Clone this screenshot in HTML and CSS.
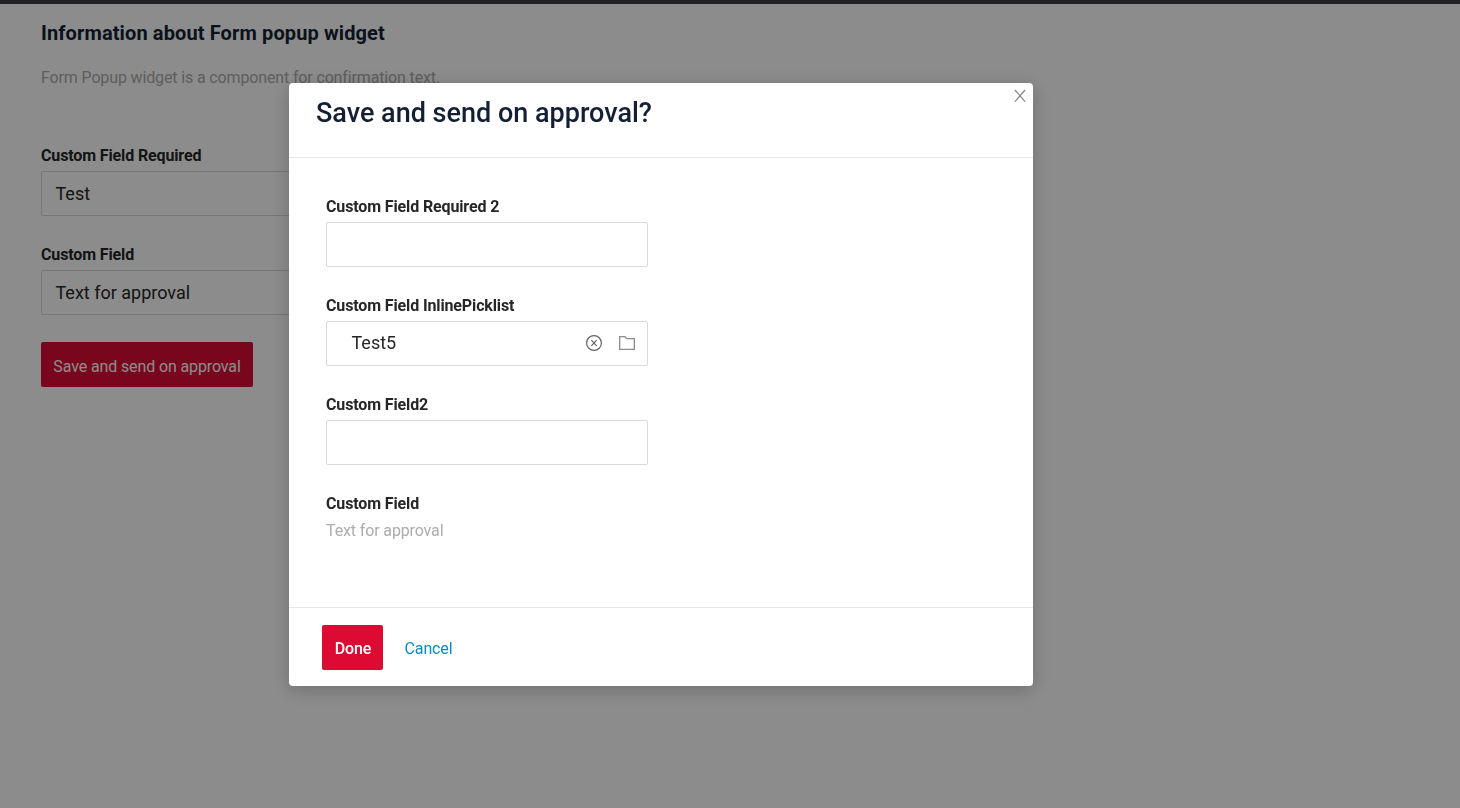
FILE: index.html
```html
<!DOCTYPE html>
<html lang="en">
<head>
<meta charset="utf-8">
<title>Form popup widget</title>
<link rel="stylesheet" href="styles.css">
</head>
<body>
<div class="topbar"></div>
<main class="page">
  <h1 class="page-title">Information about Form popup widget</h1>
  <p class="page-text">Form Popup widget is a component for confirmation text.</p>
  <div class="field">
    <span class="label">Custom Field Required</span>
    <div class="input">Test</div>
  </div>
  <div class="field">
    <span class="label">Custom Field</span>
    <div class="input">Text for approval</div>
  </div>
  <button class="btn btn-save">Save and send on approval</button>
</main>
<div class="mask">
  <section class="modal" role="dialog">
    <header class="modal-header">
      <h2 class="modal-title">Save and send on approval?</h2>
      <svg class="close" width="12" height="13" viewBox="0 0 12 13"><path d="M1 1 11 12.6M11 1 1 12.6" fill="none" stroke="#858585" stroke-width="1.25"/></svg>
    </header>
    <div class="modal-body">
      <div class="field">
        <span class="label">Custom Field Required 2</span>
        <div class="input"></div>
      </div>
      <div class="field">
        <span class="label">Custom Field InlinePicklist</span>
        <div class="input picklist">
          <span class="picklist-value">Test5</span>
          <svg width="16" height="16" viewBox="0 0 16 16" fill="none" stroke="#636363"><circle cx="8" cy="8" r="7.4" stroke-width="1.2"/><path d="M5.4 5.2 10.6 10.8M10.6 5.2 5.4 10.8" stroke-width="1.2"/></svg>
          <svg width="16" height="14" viewBox="0 0 16 14" fill="none" stroke="#8c8c8c" stroke-width="1.3"><path d="M.65 .65H5.9L7.7 2.6H15.35V13.35H.65Z"/></svg>
        </div>
      </div>
      <div class="field">
        <span class="label">Custom Field2</span>
        <div class="input"></div>
      </div>
      <div class="field">
        <span class="label">Custom Field</span>
        <span class="readonly">Text for approval</span>
      </div>
    </div>
    <footer class="modal-footer">
      <button class="btn btn-done">Done</button>
      <a class="cancel">Cancel</a>
    </footer>
  </section>
</div>
</body>
</html>
```
FILE: styles.css
```css
* { box-sizing: border-box; }
body {
  margin: 0;
  height: 808px;
  overflow: hidden;
  background: #fff;
  color: #262626;
  font-family: Roboto, sans-serif;
  font-size: 16px;
}
.topbar { height: 4px; background: #3f3f44; }
.page { padding: 14px 41px 0; }
.page-title {
  margin: 0;
  font-size: 20px;
  line-height: 30px;
  font-weight: 700;
  letter-spacing: 0.12px;
  color: #141f35;
}
.page-text { margin: 18px 0 53px; line-height: 24px; letter-spacing: -0.14px; color: #acacac; }
.field { display: flex; flex-direction: column; width: 322px; height: 99px; }
.label { height: 28px; line-height: 26px; font-weight: 700; letter-spacing: -0.13px; }
.input {
  height: 45px;
  padding: 0 13.5px;
  border: 1px solid #d9d9d9;
  border-radius: 2px;
  font-size: 18px;
  line-height: 43px;
}
.btn {
  display: block;
  height: 45px;
  padding: 4px 0 0;
  border: 0;
  border-radius: 2px;
  background: #dd0b33;
  color: #fff;
  font: 400 16px/24px Roboto, sans-serif;
  letter-spacing: -0.12px;
}
.btn-save { width: 212px; margin-top: 1px; }
.mask {
  position: fixed;
  inset: 0;
  background: rgba(0, 0, 0, 0.45);
}
.modal {
  display: flex;
  flex-direction: column;
  width: 744px;
  height: 603px;
  margin: 83px 0 0 289px;
  border-radius: 4px;
  background: #fff;
  box-shadow: 0 4px 20px rgba(0, 0, 0, 0.22);
}
.modal-header {
  display: flex;
  justify-content: space-between;
  align-items: flex-start;
  height: 75px;
  padding: 6px 7px 0 27px;
  border-bottom: 1px solid #e8e8e8;
}
.modal-title {
  margin: 4px 0 0;
  font-size: 27px;
  line-height: 40px;
  font-weight: 500;
  color: #141f35;
}
.modal-body { flex: 1; padding: 36px 37px 0; }
.picklist { display: flex; align-items: center; padding: 0 12px 2px 24.5px; line-height: 41px; }
.picklist-value { flex: 1; }
.picklist svg + svg { margin-left: 17px; }
.readonly { line-height: 24px; letter-spacing: -0.13px; color: #acacac; }
.modal-footer {
  display: flex;
  align-items: center;
  gap: 21.5px;
  height: 79px;
  padding: 1px 33px 0;
  border-top: 1px solid #e8e8e8;
}
.btn-done { width: 61px; padding: 2px 0 0 1px; font-weight: 500; }
.cancel { padding-top: 1px; letter-spacing: -0.12px; color: #0c88c2; }
```
